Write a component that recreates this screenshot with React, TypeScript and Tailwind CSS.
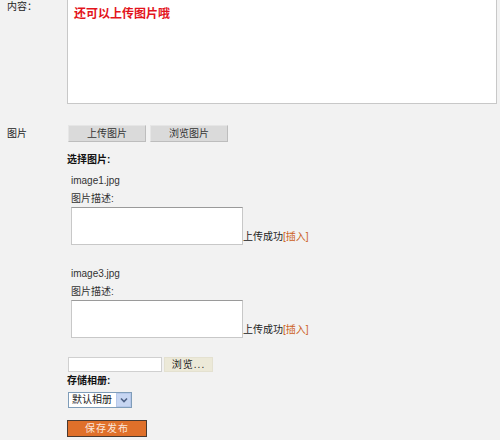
export default function App() {
  const font = { fontFamily: '"Liberation Sans", "Noto Sans CJK SC", sans-serif' }

  const imageItem = (name: string) => (
    <div className="pl-[4px]">
      <div className="leading-[12px] h-[12px]">{name}</div>
      <div className="mt-[6px] leading-[12px] h-[12px]">图片描述:</div>
      <div className="mt-[2px] flex items-end">
        <div className="w-[172px] h-[38px] bg-white border border-[#c8c8c8] border-t-[#9a9a9a]"></div>
        <span className="leading-[12px] mb-[2px] text-[#222]">上传成功</span>
        <span className="leading-[12px] mb-[2px] text-[#cc5f22]">[插入]</span>
      </div>
    </div>
  )

  return (
    <div
      className="w-[500px] h-[440px] overflow-hidden bg-[#f2f2f2] text-[10px] text-[#333]"
      style={font}
    >
      {/* content editor */}
      <div className="flex">
        <div className="w-[67px] pl-[7px] pt-[1px] leading-[12px] text-[#222]">内容：</div>
        <div className="w-[430px] h-[107px] -mt-[3px] bg-white border border-[#c8c8c8]">
          <div className="pl-[6px] pt-[10px] text-[12px] leading-[12px] font-bold text-[#e3141c]">
            还可以上传图片哦
          </div>
        </div>
      </div>

      {/* image upload buttons */}
      <div className="flex items-center mt-[21px] h-[17px]">
        <div className="w-[68px] pl-[7px] leading-[12px] text-[#222]">图片</div>
        <button className="w-[78px] h-[17px] bg-[#dadada] border border-[#e6e6e6] border-b-[#bdbdbd] border-r-[#bdbdbd] leading-[12px] text-[#333]">
          上传图片
        </button>
        <button className="ml-[4px] w-[78px] h-[17px] bg-[#dadada] border border-[#e6e6e6] border-b-[#bdbdbd] border-r-[#bdbdbd] leading-[12px] text-[#333]">
          浏览图片
        </button>
      </div>

      <div className="pl-[67px]">
        <div className="mt-[12px] leading-[12px] h-[12px] font-bold text-[#111]">选择图片:</div>
        <div className="mt-[9px]">{imageItem('image1.jpg')}</div>
        <div className="mt-[23px]">{imageItem('image3.jpg')}</div>

        {/* file input */}
        <div className="mt-[19px] flex items-center pl-[1px]">
          <div className="w-[94px] h-[15px] bg-white border border-[#d0d0d0]"></div>
          <button className="ml-[2px] w-[49px] h-[15px] bg-[#ece9d8] border border-[#e4e1d0] leading-[12px] text-[#222] tracking-[1px]">
            浏览...
          </button>
        </div>

        <div className="mt-[3px] leading-[12px] h-[12px] font-bold text-[#111]">存储相册:</div>

        <div className="mt-[5px] pl-[1px]">
          <div className="w-[64px] h-[16px] bg-white border border-[#7f9db9] flex items-center">
            <span className="flex-1 pl-[3px] leading-[12px] text-[#222] whitespace-nowrap">默认相册</span>
            <span className="w-[15px] h-[14px] bg-[#c7d6f2] border border-[#b6c8ea] flex items-center justify-center">
              <svg width="8" height="6" viewBox="0 0 8 6">
                <path d="M1 1.5 L4 4.5 L7 1.5" stroke="#4d6185" strokeWidth="1.6" fill="none" />
              </svg>
            </span>
          </div>
        </div>

        <button className="mt-[12px] w-[80px] h-[17px] bg-[#e0702a] border border-[#4a3a30] leading-[12px] text-[#fbe6dc] tracking-[1px]">
          保存发布
        </button>
      </div>
    </div>
  )
}
